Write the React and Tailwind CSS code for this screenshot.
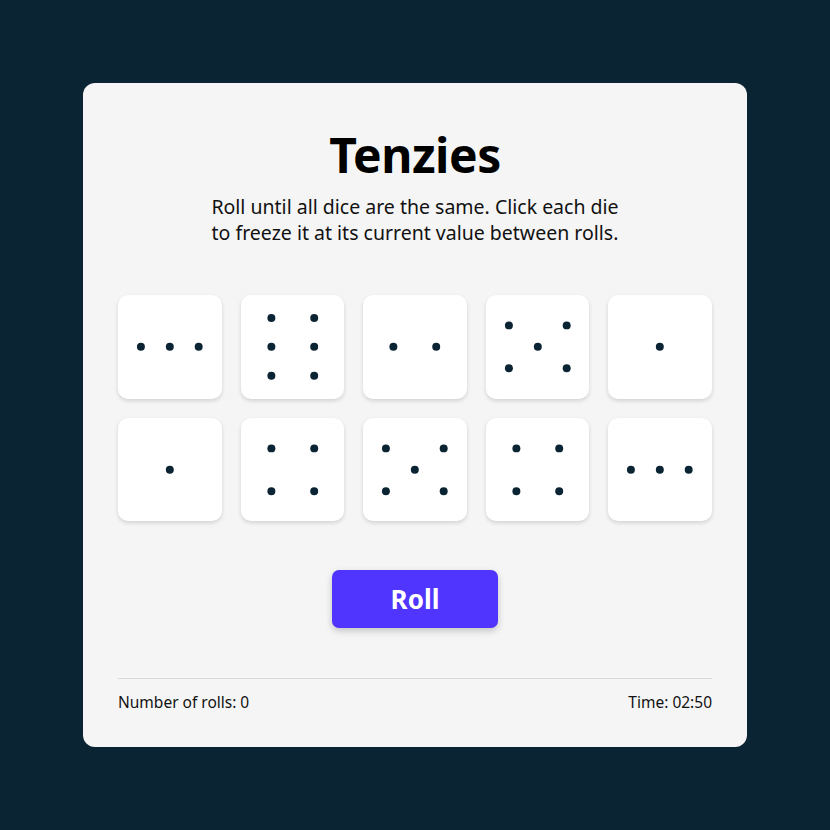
const faces = {
  1: [[0, 0]],
  2: [[-21.5, 0], [21.5, 0]],
  3: [[-29, 0], [0, 0], [29, 0]],
  4: [[-21.5, -21.5], [21.5, -21.5], [-21.5, 21.5], [21.5, 21.5]],
  5: [[-29, -21.5], [29, -21.5], [0, 0], [-29, 21.5], [29, 21.5]],
  6: [[-21.5, -29], [21.5, -29], [-21.5, 0], [21.5, 0], [-21.5, 29], [21.5, 29]],
};

const dice = [3, 6, 2, 5, 1, 1, 4, 5, 4, 3];

const Die = ({value}) => {
  return (
    <button className="aspect-square w-full rounded-[10px] bg-white shadow-[0_2px_4px_rgba(0,0,0,0.14)]">
      <svg viewBox="-52 -52 104 104" className="h-full w-full">
        {faces[value].map(([x, y], i) => (
          <circle key={i} cx={x} cy={y} r="4" fill="#0b2434" />
        ))}
      </svg>
    </button>
  );
};

export default function App() {
  return (
    <main className="flex h-[830px] w-full items-center justify-center bg-[#0b2434] font-['Noto_Sans',sans-serif]">
      <div className="flex h-[664px] w-[664px] flex-col rounded-[12px] bg-[#f5f5f5] px-[35px] pt-[44px]">
        <h1 className="text-center text-[48px] font-bold leading-[56px] tracking-[-0.5px] text-black">
          Tenzies
        </h1>
        <p className="mx-auto mt-[11px] max-w-[420px] text-center text-[19.5px] leading-[26px] text-[#111]">
          Roll until all dice are the same. Click each die to freeze it at its current value between rolls.
        </p>
        <div className="mt-[49px] grid grid-cols-5 gap-[19px]">
          {dice.map((v, i) => (
            <Die key={i} value={v} />
          ))}
        </div>
        <button className="mx-auto mt-[49px] h-[58px] w-[166px] rounded-[7px] bg-[#5035ff] text-[26px] font-bold text-white shadow-[0_3px_7px_rgba(0,0,0,0.2)]">
          Roll
        </button>
        <div className="mt-[50px] border-t border-[#d9d9d9] pt-[11px]">
          <div className="flex justify-between text-[15.5px] leading-[24px] text-[#111]">
            <span>Number of rolls: 0</span>
            <span>Time: 02:50</span>
          </div>
        </div>
      </div>
    </main>
  );
}
